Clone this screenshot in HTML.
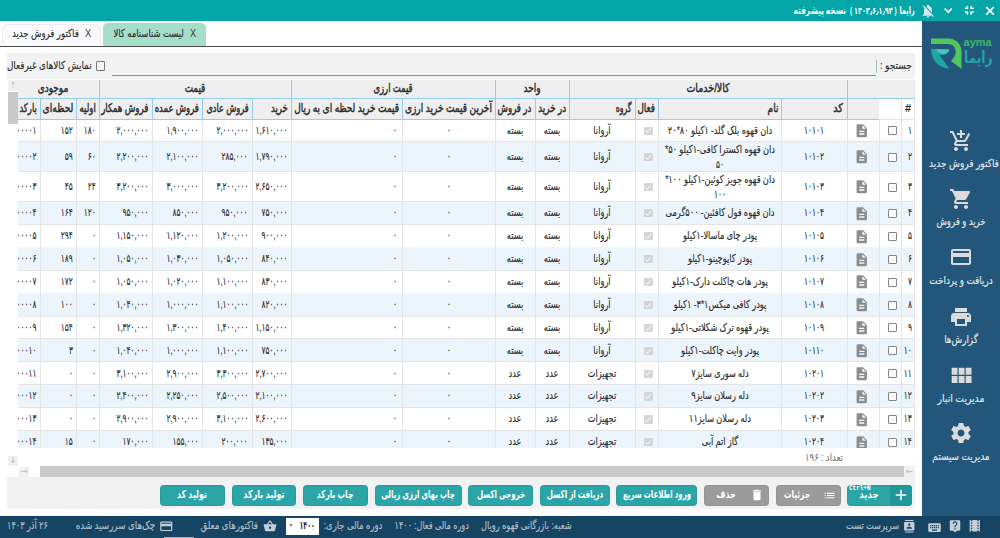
<!DOCTYPE html>
<html lang="fa" dir="rtl"><head><meta charset="utf-8"><title>رایما - لیست شناسنامه کالا</title><style>
html,body{margin:0;padding:0}
body{width:1000px;height:538px;overflow:hidden;background:#fff;position:relative;font-family:'Liberation Sans','DejaVu Sans',sans-serif;direction:rtl}
div{position:absolute}
#titlebar,#sidebar,#tabs,#panel,#grid,#buttons,#statusbar{left:0;top:0;width:1000px;height:538px;overflow:hidden}
.t{position:absolute;white-space:nowrap;line-height:1;direction:rtl;unicode-bidi:isolate;-webkit-text-stroke:.15px}
.b{font-weight:bold;-webkit-text-stroke:0}
.sb{-webkit-text-stroke:.45px}
.ic{position:absolute;display:block}
</style></head><body>
<div id="titlebar">
<div style="left:0px;top:0px;width:1000px;height:20.5px;background:#03a5a7;"></div>
<svg class="ic" style="left:900px;top:0;width:100px;height:21px" viewBox="900 0 100 21"><g fill="none" stroke="#fff" stroke-width="1.7"><path d="M986.2 7.100l7.600 7.600M993.800 7.100l-7.600 7.600"/><path stroke-width="1.800" d="M944.700 8.700l3.500 3.500 3.500-3.500"/></g></svg>
<svg class="ic" style="left:961.85px;top:3.25px;width:14.5px;height:14.5px;stroke:#fff;stroke-width:.5px;" viewBox="0 0 24 24"><path fill="#fff" d="M5 16h3v3h2v-5H5v2zm3-8H5v2h5V5H8v3zm6 11h2v-3h3v-2h-5v5zm2-11V5h-2v5h5V8h-3z"/></svg>
<svg class="ic" style="left:919.8px;top:3.2px;width:16px;height:16px;" viewBox="0 0 24 24"><path fill="#d3e9ee" d="M20 18.69L7.84 6.14 5.27 3.49 4 4.76l2.8 2.8v.01c-.52.99-.8 2.16-.8 3.42v5l-2 2v1h13.73l2 2L21 19.72l-1-1.03zM12 22c1.11 0 2-.89 2-2h-4c0 1.11.89 2 2 2zm6-7.32V11c0-3.08-1.64-5.64-4.5-6.32V4c0-.83-.67-1.5-1.5-1.5s-1.5.67-1.5 1.5v.68c-.15.03-.29.08-.42.12-.1.03-.2.07-.3.11h-.01c-.01 0-.01 0-.02.01-.23.09-.46.2-.68.31 0 0-.01 0-.01.01L18 14.68z"/></svg>
<span class="t b" style="top:10.3px;font-size:11px;color:#fff;right:85.2px;transform-origin:right center;transform:translateY(-50%) scaleX(0.588);">رایما</span>
<span class="t b" style="top:10.5px;font-size:9.5px;color:#fff;right:103.2px;transform-origin:right center;transform:translateY(-50%) scaleX(0.678);">( ۱۴۰۳٫۶٫۱٫۹۲ )</span>
<span class="t b" style="top:10.3px;font-size:11px;color:#fff;right:153.8px;transform-origin:right center;transform:translateY(-50%) scaleX(0.673);">نسخه پیشرفته</span>
</div>
<div id="sidebar">
<div style="left:922.3px;top:21px;width:77.7px;height:495px;background:#22577b;"></div>
<svg class="ic" style="left:926px;top:32px;width:72px;height:44px" viewBox="926 32 72 44">
<path fill="#52c75c" d="M931 38.600H948C956 38.600 961.500 44 961.500 52V69L951 61C953.500 58 955.700 55.500 955.700 52C955.700 47 952.500 44.100 948 44.100H931Z"/>
<path fill="#1fa79f" d="M931 49H949.400C949.400 52 947 54.500 943.500 54.700L939.300 54.700L949.400 68.700C938 68 931.500 60 931 49Z"/>
<path fill="#49c6c4" d="M936 49.500H949C948.500 52.500 945.500 54 942.500 54C939.500 53.500 937.500 52 936 49.500Z"/>
<text x="977.6" y="46.300" font-family="'Liberation Sans',sans-serif" font-size="11" font-weight="bold" fill="#3dba6c" text-anchor="middle" textLength="28.200" lengthAdjust="spacingAndGlyphs">ayma</text>
</svg>
<span class="t b" style="top:56.6px;font-size:16.5px;color:#2a9fb0;font-family:'Liberation Sans','DejaVu Sans',sans-serif;right:7.5px;transform-origin:right center;transform:translateY(-50%) scaleX(0.744);">رایما</span>
<svg class="ic" style="left:949px;top:129.3px;width:24px;height:24px;" viewBox="0 0 24 24"><path fill="#dcdcdc" d="M11 9h2V6h3V4h-3V1h-2v3H8v2h3v3zm-4 9c-1.1 0-1.99.9-1.99 2S5.9 22 7 22s2-.9 2-2-.9-2-2-2zm10 0c-1.1 0-1.99.9-1.99 2s.89 2 1.99 2 2-.9 2-2-.9-2-2-2zm-9.83-3.25l.03-.12.9-1.63h7.45c.75 0 1.41-.41 1.75-1.03l3.86-7.01L19.42 4h-.01l-1.1 2-2.76 5H8.53l-.13-.27L6.16 6l-.95-2-.94-2H1v2h2l3.6 7.59-1.35 2.45c-.16.28-.25.61-.25.96 0 1.1.9 2 2 2h12v-2H7.42c-.13 0-.25-.11-.25-.25z"/></svg>
<span class="t" style="top:163px;font-size:11px;color:#e6e9ec;left:964px;transform:translate(-50%,-50%) scaleX(0.814);">فاکتور فروش جدید</span>
<svg class="ic" style="left:949px;top:187.3px;width:24px;height:24px;" viewBox="0 0 24 24"><path fill="#dcdcdc" d="M7 18c-1.1 0-1.99.9-1.99 2S5.9 22 7 22s2-.9 2-2-.9-2-2-2zM1 2v2h2l3.6 7.59-1.35 2.45c-.16.28-.25.61-.25.96 0 1.1.9 2 2 2h12v-2H7.42c-.14 0-.25-.11-.25-.25l.03-.12.9-1.63h7.45c.75 0 1.41-.41 1.75-1.03l3.58-6.49c.08-.14.12-.31.12-.48 0-.55-.45-1-1-1H5.21l-.94-2H1zm16 16c-1.1 0-1.99.9-1.99 2s.89 2 1.99 2 2-.9 2-2-.9-2-2-2z"/></svg>
<span class="t" style="top:221px;font-size:11px;color:#e6e9ec;left:961px;transform:translate(-50%,-50%) scaleX(0.778);">خرید و فروش</span>
<svg class="ic" style="left:949px;top:245px;width:24px;height:24px;" viewBox="0 0 24 24"><path fill="#dcdcdc" d="M20 4H4c-1.11 0-1.99.89-1.99 2L2 18c0 1.11.89 2 2 2h16c1.11 0 2-.89 2-2V6c0-1.11-.89-2-2-2zm0 14H4v-6h16v6zm0-10H4V6h16v2z"/></svg>
<span class="t" style="top:280px;font-size:11px;color:#e6e9ec;left:961px;transform:translate(-50%,-50%) scaleX(0.804);">دریافت و پرداخت</span>
<svg class="ic" style="left:949px;top:304.7px;width:24px;height:24px;" viewBox="0 0 24 24"><path fill="#dcdcdc" d="M19 8H5c-1.66 0-3 1.34-3 3v6h4v4h12v-4h4v-6c0-1.66-1.34-3-3-3zm-3 11H8v-5h8v5zm3-7c-.55 0-1-.45-1-1s.45-1 1-1 1 .45 1 1-.45 1-1 1zm-1-9H6v4h12V3z"/></svg>
<span class="t" style="top:338.5px;font-size:11px;color:#e6e9ec;left:961px;transform:translate(-50%,-50%) scaleX(0.798);">گزارش‌ها</span>
<svg class="ic" style="left:947px;top:362px;width:28px;height:28px;" viewBox="0 0 24 24"><path fill="#dcdcdc" d="M4 11h5V5H4v6zm0 7h5v-6H4v6zm6 0h5v-6h-5v6zm6 0h5v-6h-5v6zm-6-7h5V5h-5v6zm6-6v6h5V5h-5z"/></svg>
<span class="t" style="top:397.7px;font-size:11px;color:#e6e9ec;left:961px;transform:translate(-50%,-50%) scaleX(0.839);">مدیریت انبار</span>
<svg class="ic" style="left:949px;top:421.4px;width:24px;height:24px;" viewBox="0 0 24 24"><path fill="#dcdcdc" d="M19.43 12.98c.04-.32.07-.64.07-.98s-.03-.66-.07-.98l2.11-1.65c.19-.15.24-.42.12-.64l-2-3.46c-.12-.22-.39-.3-.61-.22l-2.49 1c-.52-.4-1.08-.73-1.69-.98l-.38-2.65C14.46 2.18 14.25 2 14 2h-4c-.25 0-.46.18-.49.42l-.38 2.65c-.61.25-1.17.59-1.69.98l-2.49-1c-.23-.09-.49 0-.61.22l-2 3.46c-.13.22-.07.49.12.64l2.11 1.65c-.04.32-.07.65-.07.98s.03.66.07.98l-2.11 1.65c-.19.15-.24.42-.12.64l2 3.46c.12.22.39.3.61.22l2.49-1c.52.4 1.08.73 1.69.98l.38 2.65c.03.24.24.42.49.42h4c.25 0 .46-.18.49-.42l.38-2.65c.61-.25 1.17-.59 1.69-.98l2.49 1c.23.09.49 0 .61-.22l2-3.46c.12-.22.07-.49-.12-.64l-2.11-1.65zM12 15.5c-1.93 0-3.5-1.57-3.5-3.5s1.57-3.5 3.5-3.5 3.5 1.57 3.5 3.5-1.57 3.5-3.5 3.5z"/></svg>
<span class="t" style="top:456px;font-size:11px;color:#e6e9ec;left:961px;transform:translate(-50%,-50%) scaleX(0.81);">مدیریت سیستم</span>
</div>
<div id="tabs">
<div style="left:103px;top:23px;width:102.7px;height:24px;background:#a6dfc9;border-radius:5px 5px 0 0;"></div>
<div style="left:2.3px;top:23.5px;width:98.7px;height:23px;background:#f9f9fb;border-radius:5px 5px 0 0;border:1px solid #ececec;border-bottom:none;box-sizing:border-box;"></div>
<div style="left:0px;top:46px;width:922.5px;height:1px;background:#4a4a4a;"></div>
<span class="t" style="top:34px;font-size:11.5px;color:#333;font-family:'Liberation Sans',sans-serif;left:192.5px;transform:translate(-50%,-50%) scaleX(0.8);-webkit-text-stroke:0;">X</span>
<span class="t" style="top:32.8px;font-size:11px;color:#2b2b2b;right:816px;transform-origin:right center;transform:translateY(-50%) scaleX(0.766);">لیست شناسنامه کالا</span>
<span class="t" style="top:34px;font-size:11.5px;color:#333;font-family:'Liberation Sans',sans-serif;left:87.5px;transform:translate(-50%,-50%) scaleX(0.8);-webkit-text-stroke:0;">X</span>
<span class="t" style="top:32.8px;font-size:11px;color:#2b2b2b;right:921.2px;transform-origin:right center;transform:translateY(-50%) scaleX(0.779);">فاکتور فروش جدید</span>
</div>
<div id="panel">
<div style="left:7px;top:53px;width:908.3px;height:456px;background:#f2f2f2;"></div>
<span class="t" style="top:65px;font-size:11px;color:#2b2b2b;right:87.7px;transform-origin:right center;transform:translateY(-50%) scaleX(0.821);">جستجو :</span>
<div style="left:112px;top:74.6px;width:764px;height:1.2px;background:#8e8e8e;"></div>
<div style="left:7px;top:78.6px;width:908.3px;height:1.2px;background:#fbfbfb;"></div>
<div style="left:875.5px;top:59.5px;width:1px;height:13px;background:#9dbdb0;"></div>
<div style="left:96px;top:61.4px;width:9px;height:9.2px;background:#f6f6f6;border-radius:1px;border:1px solid #777;box-sizing:border-box;"></div>
<span class="t" style="top:65.3px;font-size:11px;color:#2b2b2b;right:908px;transform-origin:right center;transform:translateY(-50%) scaleX(0.802);">نمایش کالاهای غیرفعال</span>
</div>
<div id="grid">
<div style="left:7px;top:80px;width:907.7px;height:368px;background:#fff;"></div>
<div style="left:7px;top:80px;width:907.7px;height:18.5px;background:#f0efef;"></div>
<div style="left:7px;top:98.5px;width:872px;height:20.5px;background:#f0efef;"></div>
<div style="left:7px;top:141px;width:907.7px;height:1px;background:#e5e5e5;"></div>
<div style="left:7px;top:141.5px;width:907.7px;height:30px;background:#edf5fc;"></div>
<div style="left:7px;top:171px;width:907.7px;height:1px;background:#e5e5e5;"></div>
<div style="left:7px;top:201px;width:907.7px;height:1px;background:#e5e5e5;"></div>
<div style="left:7px;top:201.5px;width:907.7px;height:22.9px;background:#edf5fc;"></div>
<div style="left:7px;top:223.9px;width:907.7px;height:1px;background:#e5e5e5;"></div>
<div style="left:7px;top:246.8px;width:907.7px;height:1px;background:#e5e5e5;"></div>
<div style="left:7px;top:247.3px;width:907.7px;height:22.9px;background:#edf5fc;"></div>
<div style="left:7px;top:269.7px;width:907.7px;height:1px;background:#e5e5e5;"></div>
<div style="left:7px;top:292.6px;width:907.7px;height:1px;background:#e5e5e5;"></div>
<div style="left:7px;top:293.1px;width:907.7px;height:22.9px;background:#edf5fc;"></div>
<div style="left:7px;top:315.5px;width:907.7px;height:1px;background:#e5e5e5;"></div>
<div style="left:7px;top:338.4px;width:907.7px;height:1px;background:#e5e5e5;"></div>
<div style="left:7px;top:338.9px;width:907.7px;height:22.9px;background:#edf5fc;"></div>
<div style="left:7px;top:361.3px;width:907.7px;height:1px;background:#e5e5e5;"></div>
<div style="left:7px;top:384.2px;width:907.7px;height:1px;background:#e5e5e5;"></div>
<div style="left:7px;top:384.7px;width:907.7px;height:22.9px;background:#edf5fc;"></div>
<div style="left:7px;top:407.1px;width:907.7px;height:1px;background:#e5e5e5;"></div>
<div style="left:7px;top:430px;width:907.7px;height:1px;background:#e5e5e5;"></div>
<div style="left:7px;top:430.5px;width:907.7px;height:17.5px;background:#edf5fc;"></div>
<div style="left:7px;top:447.5px;width:907.7px;height:1px;background:#e5e5e5;"></div>
<div style="left:901px;top:119px;width:1px;height:329px;background:#e5e5e5;"></div>
<div style="left:878.5px;top:119px;width:1px;height:329px;background:#e5e5e5;"></div>
<div style="left:846.5px;top:119px;width:1px;height:329px;background:#e5e5e5;"></div>
<div style="left:781px;top:119px;width:1px;height:329px;background:#e5e5e5;"></div>
<div style="left:657.5px;top:119px;width:1px;height:329px;background:#e5e5e5;"></div>
<div style="left:634.5px;top:119px;width:1px;height:329px;background:#e5e5e5;"></div>
<div style="left:569px;top:119px;width:1px;height:329px;background:#e5e5e5;"></div>
<div style="left:534.5px;top:119px;width:1px;height:329px;background:#e5e5e5;"></div>
<div style="left:494.5px;top:119px;width:1px;height:329px;background:#e5e5e5;"></div>
<div style="left:402px;top:119px;width:1px;height:329px;background:#e5e5e5;"></div>
<div style="left:291px;top:119px;width:1px;height:329px;background:#e5e5e5;"></div>
<div style="left:252px;top:119px;width:1px;height:329px;background:#e5e5e5;"></div>
<div style="left:202px;top:119px;width:1px;height:329px;background:#e5e5e5;"></div>
<div style="left:151.5px;top:119px;width:1px;height:329px;background:#e5e5e5;"></div>
<div style="left:98.5px;top:119px;width:1px;height:329px;background:#e5e5e5;"></div>
<div style="left:76px;top:119px;width:1px;height:329px;background:#e5e5e5;"></div>
<div style="left:40px;top:119px;width:1px;height:329px;background:#e5e5e5;"></div>
<div style="left:914.2px;top:80px;width:1px;height:368px;background:#e5e5e5;"></div>
<div style="left:846.5px;top:98.5px;width:1px;height:20.5px;background:#93cdec;"></div>
<div style="left:781px;top:98.5px;width:1px;height:20.5px;background:#93cdec;"></div>
<div style="left:657.5px;top:98.5px;width:1px;height:20.5px;background:#93cdec;"></div>
<div style="left:634.5px;top:98.5px;width:1px;height:20.5px;background:#93cdec;"></div>
<div style="left:569px;top:98.5px;width:1px;height:20.5px;background:#93cdec;"></div>
<div style="left:534.5px;top:98.5px;width:1px;height:20.5px;background:#93cdec;"></div>
<div style="left:494.5px;top:98.5px;width:1px;height:20.5px;background:#93cdec;"></div>
<div style="left:402px;top:98.5px;width:1px;height:20.5px;background:#93cdec;"></div>
<div style="left:291px;top:98.5px;width:1px;height:20.5px;background:#93cdec;"></div>
<div style="left:252px;top:98.5px;width:1px;height:20.5px;background:#93cdec;"></div>
<div style="left:202px;top:98.5px;width:1px;height:20.5px;background:#93cdec;"></div>
<div style="left:151.5px;top:98.5px;width:1px;height:20.5px;background:#93cdec;"></div>
<div style="left:98.5px;top:98.5px;width:1px;height:20.5px;background:#93cdec;"></div>
<div style="left:76px;top:98.5px;width:1px;height:20.5px;background:#93cdec;"></div>
<div style="left:40px;top:98.5px;width:1px;height:20.5px;background:#93cdec;"></div>
<div style="left:901px;top:98.5px;width:1px;height:20.5px;background:#e5e5e5;"></div>
<div style="left:846.5px;top:80px;width:1px;height:39px;background:#93cdec;"></div>
<div style="left:569px;top:80px;width:1px;height:39px;background:#93cdec;"></div>
<div style="left:494.5px;top:80px;width:1px;height:39px;background:#93cdec;"></div>
<div style="left:291px;top:80px;width:1px;height:39px;background:#93cdec;"></div>
<div style="left:98.5px;top:80px;width:1px;height:39px;background:#93cdec;"></div>
<div style="left:7px;top:98px;width:907.7px;height:1px;background:#93cdec;"></div>
<div style="left:7px;top:118.5px;width:872px;height:1px;background:#93cdec;"></div>
<div style="left:879px;top:118.5px;width:36px;height:1px;background:#e5e5e5;"></div>
<span class="t sb" style="top:88.3px;font-size:12px;color:#2b2b2b;left:708px;transform:translate(-50%,-50%) scaleX(0.791);">کالا/خدمات</span>
<span class="t sb" style="top:88.3px;font-size:12px;color:#2b2b2b;left:532.3px;transform:translate(-50%,-50%) scaleX(0.752);">واحد</span>
<span class="t sb" style="top:88.3px;font-size:12px;color:#2b2b2b;left:393.3px;transform:translate(-50%,-50%) scaleX(0.702);">قیمت ارزی</span>
<span class="t sb" style="top:88.3px;font-size:12px;color:#2b2b2b;left:195.3px;transform:translate(-50%,-50%) scaleX(0.732);">قیمت</span>
<span class="t sb" style="top:88.3px;font-size:12px;color:#2b2b2b;left:52.8px;transform:translate(-50%,-50%) scaleX(0.744);">موجودی</span>
<span class="t b" style="top:107.5px;font-size:11px;color:#2b2b2b;font-family:'Liberation Sans',sans-serif;left:908px;transform:translate(-50%,-50%) scaleX(1);">#</span>
<span class="t sb" style="top:107.8px;font-size:12px;color:#2b2b2b;right:156.5px;transform-origin:right center;transform:translateY(-50%) scaleX(0.817);">کد</span>
<span class="t sb" style="top:107.8px;font-size:12px;color:#2b2b2b;right:222px;transform-origin:right center;transform:translateY(-50%) scaleX(0.75);">نام</span>
<span class="t sb" style="top:107.8px;font-size:12px;color:#2b2b2b;right:345.5px;transform-origin:right center;transform:translateY(-50%) scaleX(0.729);">فعال</span>
<span class="t sb" style="top:107.8px;font-size:12px;color:#2b2b2b;right:368.5px;transform-origin:right center;transform:translateY(-50%) scaleX(0.646);">گروه</span>
<span class="t sb" style="top:107.8px;font-size:12px;color:#2b2b2b;right:434px;transform-origin:right center;transform:translateY(-50%) scaleX(0.732);">در خرید</span>
<span class="t sb" style="top:107.8px;font-size:12px;color:#2b2b2b;right:468.5px;transform-origin:right center;transform:translateY(-50%) scaleX(0.713);">در فروش</span>
<span class="t sb" style="top:107.8px;font-size:12px;color:#2b2b2b;right:508.5px;transform-origin:right center;transform:translateY(-50%) scaleX(0.75);">آخرین قیمت خرید ارزی</span>
<span class="t sb" style="top:107.8px;font-size:12px;color:#2b2b2b;right:601px;transform-origin:right center;transform:translateY(-50%) scaleX(0.749);">قیمت خرید لحظه ای به ریال</span>
<span class="t sb" style="top:107.8px;font-size:12px;color:#2b2b2b;right:712px;transform-origin:right center;transform:translateY(-50%) scaleX(0.708);">خرید</span>
<span class="t sb" style="top:107.8px;font-size:12px;color:#2b2b2b;right:751px;transform-origin:right center;transform:translateY(-50%) scaleX(0.685);">فروش عادی</span>
<span class="t sb" style="top:107.8px;font-size:12px;color:#2b2b2b;right:801px;transform-origin:right center;transform:translateY(-50%) scaleX(0.703);">فروش عمده</span>
<span class="t sb" style="top:107.8px;font-size:12px;color:#2b2b2b;right:851.5px;transform-origin:right center;transform:translateY(-50%) scaleX(0.723);">فروش همکار</span>
<span class="t sb" style="top:107.8px;font-size:12px;color:#2b2b2b;right:904.5px;transform-origin:right center;transform:translateY(-50%) scaleX(0.717);">اولیه</span>
<span class="t sb" style="top:107.8px;font-size:12px;color:#2b2b2b;right:927px;transform-origin:right center;transform:translateY(-50%) scaleX(0.762);">لحظه‌ای</span>
<span class="t sb" style="top:107.8px;font-size:12px;color:#2b2b2b;right:963px;transform-origin:right center;transform:translateY(-50%) scaleX(0.7);">بارکد</span>
<span class="t" style="top:129.55px;font-size:11px;color:#2b2b2b;right:87.8px;transform-origin:right center;transform:translateY(-50%) scaleX(0.675);">۱</span>
<div style="left:887.5px;top:126.25px;width:9px;height:9px;background:#fff;border:1px solid #858585;border-radius:1px;box-sizing:border-box;"></div>
<svg class="ic" style="left:853.55px;top:123px;width:15.5px;height:15.5px;" viewBox="0 0 24 24"><path fill="#8c8c8c" d="M14 2H6c-1.1 0-1.99.9-1.99 2L4 20c0 1.1.89 2 1.99 2H18c1.1 0 2-.9 2-2V8l-6-6zm2 16H8v-2h8v2zm0-4H8v-2h8v2zm-3-5V3.5L18.5 9H13z"/></svg>
<span class="t" style="top:129.55px;font-size:11px;color:#2b2b2b;left:814px;transform:translate(-50%,-50%) scaleX(0.675);">۱۰۱۰۱</span>
<span class="t" style="top:129.55px;font-size:11px;color:#2b2b2b;left:719.5px;transform:translate(-50%,-50%) scaleX(0.747);">دان قهوه بلک گلد- ۱کیلو ۸۰*۲۰</span>
<div style="left:644px;top:126.55px;width:8.9px;height:8.2px;background:#d5d5d5;border-radius:1px;"></div>
<svg class="ic" style="left:644.15px;top:126.4px;width:8.5px;height:8.5px;" viewBox="0 0 24 24"><path fill="#fff" d="M9 16.17L4.83 12l-1.42 1.41L9 19 21 7l-1.41-1.41z"/></svg>
<span class="t" style="top:129.55px;font-size:11px;color:#2b2b2b;left:602px;transform:translate(-50%,-50%) scaleX(0.747);">آروانا</span>
<span class="t" style="top:129.55px;font-size:11px;color:#2b2b2b;left:552px;transform:translate(-50%,-50%) scaleX(0.747);">بسته</span>
<span class="t" style="top:129.55px;font-size:11px;color:#2b2b2b;left:515px;transform:translate(-50%,-50%) scaleX(0.747);">بسته</span>
<span class="t" style="top:129.55px;font-size:11px;color:#2b2b2b;left:449px;transform:translate(-50%,-50%) scaleX(0.675);">۰</span>
<span class="t" style="top:129.55px;font-size:11px;color:#2b2b2b;right:603.5px;transform-origin:right center;transform:translateY(-50%) scaleX(0.675);">۰</span>
<span class="t" style="top:129.55px;font-size:11px;color:#2b2b2b;right:712.3px;transform-origin:right center;transform:translateY(-50%) scaleX(0.675);">۱,۶۱۰,۰۰۰</span>
<span class="t" style="top:129.55px;font-size:11px;color:#2b2b2b;right:752px;transform-origin:right center;transform:translateY(-50%) scaleX(0.675);">۲,۰۰۰,۰۰۰</span>
<span class="t" style="top:129.55px;font-size:11px;color:#2b2b2b;right:801.2px;transform-origin:right center;transform:translateY(-50%) scaleX(0.675);">۱,۹۰۰,۰۰۰</span>
<span class="t" style="top:129.55px;font-size:11px;color:#2b2b2b;right:851.8px;transform-origin:right center;transform:translateY(-50%) scaleX(0.675);">۲,۰۰۰,۰۰۰</span>
<span class="t" style="top:129.55px;font-size:11px;color:#2b2b2b;right:904.5px;transform-origin:right center;transform:translateY(-50%) scaleX(0.675);">۱۸۰</span>
<span class="t" style="top:129.55px;font-size:11px;color:#2b2b2b;right:927.5px;transform-origin:right center;transform:translateY(-50%) scaleX(0.675);">۱۵۲</span>
<span class="t" style="top:129.55px;font-size:11px;color:#2b2b2b;right:963px;transform-origin:right center;transform:translateY(-50%) scaleX(0.675);">۰۰۰۰۱</span>
<span class="t" style="top:155.8px;font-size:11px;color:#2b2b2b;right:87.8px;transform-origin:right center;transform:translateY(-50%) scaleX(0.675);">۲</span>
<div style="left:887.5px;top:152.5px;width:9px;height:9px;background:#fff;border:1px solid #858585;border-radius:1px;box-sizing:border-box;"></div>
<svg class="ic" style="left:853.55px;top:149.25px;width:15.5px;height:15.5px;" viewBox="0 0 24 24"><path fill="#8c8c8c" d="M14 2H6c-1.1 0-1.99.9-1.99 2L4 20c0 1.1.89 2 1.99 2H18c1.1 0 2-.9 2-2V8l-6-6zm2 16H8v-2h8v2zm0-4H8v-2h8v2zm-3-5V3.5L18.5 9H13z"/></svg>
<span class="t" style="top:155.8px;font-size:11px;color:#2b2b2b;left:814px;transform:translate(-50%,-50%) scaleX(0.675);">۱۰۱۰۲</span>
<span class="t" style="top:148.5px;font-size:11px;color:#2b2b2b;left:719.5px;transform:translate(-50%,-50%) scaleX(0.747);">دان قهوه اکسترا کافی-۱کیلو ۵۰*</span>
<span class="t" style="top:163.5px;font-size:11px;color:#2b2b2b;left:719.5px;transform:translate(-50%,-50%) scaleX(0.675);">۵۰</span>
<div style="left:644px;top:152.8px;width:8.9px;height:8.2px;background:#d5d5d5;border-radius:1px;"></div>
<svg class="ic" style="left:644.15px;top:152.65px;width:8.5px;height:8.5px;" viewBox="0 0 24 24"><path fill="#fff" d="M9 16.17L4.83 12l-1.42 1.41L9 19 21 7l-1.41-1.41z"/></svg>
<span class="t" style="top:155.8px;font-size:11px;color:#2b2b2b;left:602px;transform:translate(-50%,-50%) scaleX(0.747);">آروانا</span>
<span class="t" style="top:155.8px;font-size:11px;color:#2b2b2b;left:552px;transform:translate(-50%,-50%) scaleX(0.747);">بسته</span>
<span class="t" style="top:155.8px;font-size:11px;color:#2b2b2b;left:515px;transform:translate(-50%,-50%) scaleX(0.747);">بسته</span>
<span class="t" style="top:155.8px;font-size:11px;color:#2b2b2b;left:449px;transform:translate(-50%,-50%) scaleX(0.675);">۰</span>
<span class="t" style="top:155.8px;font-size:11px;color:#2b2b2b;right:603.5px;transform-origin:right center;transform:translateY(-50%) scaleX(0.675);">۰</span>
<span class="t" style="top:155.8px;font-size:11px;color:#2b2b2b;right:712.3px;transform-origin:right center;transform:translateY(-50%) scaleX(0.675);">۱,۷۹۰,۰۰۰</span>
<span class="t" style="top:155.8px;font-size:11px;color:#2b2b2b;right:752px;transform-origin:right center;transform:translateY(-50%) scaleX(0.675);">۲۸۵,۰۰۰</span>
<span class="t" style="top:155.8px;font-size:11px;color:#2b2b2b;right:801.2px;transform-origin:right center;transform:translateY(-50%) scaleX(0.675);">۲,۱۰۰,۰۰۰</span>
<span class="t" style="top:155.8px;font-size:11px;color:#2b2b2b;right:851.8px;transform-origin:right center;transform:translateY(-50%) scaleX(0.675);">۲,۲۰۰,۰۰۰</span>
<span class="t" style="top:155.8px;font-size:11px;color:#2b2b2b;right:904.5px;transform-origin:right center;transform:translateY(-50%) scaleX(0.675);">۶۰</span>
<span class="t" style="top:155.8px;font-size:11px;color:#2b2b2b;right:927.5px;transform-origin:right center;transform:translateY(-50%) scaleX(0.675);">۵۹</span>
<span class="t" style="top:155.8px;font-size:11px;color:#2b2b2b;right:963px;transform-origin:right center;transform:translateY(-50%) scaleX(0.675);">۰۰۰۰۲</span>
<span class="t" style="top:185.8px;font-size:11px;color:#2b2b2b;right:87.8px;transform-origin:right center;transform:translateY(-50%) scaleX(0.675);">۳</span>
<div style="left:887.5px;top:182.5px;width:9px;height:9px;background:#fff;border:1px solid #858585;border-radius:1px;box-sizing:border-box;"></div>
<svg class="ic" style="left:853.55px;top:179.25px;width:15.5px;height:15.5px;" viewBox="0 0 24 24"><path fill="#8c8c8c" d="M14 2H6c-1.1 0-1.99.9-1.99 2L4 20c0 1.1.89 2 1.99 2H18c1.1 0 2-.9 2-2V8l-6-6zm2 16H8v-2h8v2zm0-4H8v-2h8v2zm-3-5V3.5L18.5 9H13z"/></svg>
<span class="t" style="top:185.8px;font-size:11px;color:#2b2b2b;left:814px;transform:translate(-50%,-50%) scaleX(0.675);">۱۰۱۰۳</span>
<span class="t" style="top:178.5px;font-size:11px;color:#2b2b2b;left:719.5px;transform:translate(-50%,-50%) scaleX(0.747);">دان قهوه جویز کوئین-۱کیلو ۱۰۰*</span>
<span class="t" style="top:193.5px;font-size:11px;color:#2b2b2b;left:719.5px;transform:translate(-50%,-50%) scaleX(0.675);">۱۰۰</span>
<div style="left:644px;top:182.8px;width:8.9px;height:8.2px;background:#d5d5d5;border-radius:1px;"></div>
<svg class="ic" style="left:644.15px;top:182.65px;width:8.5px;height:8.5px;" viewBox="0 0 24 24"><path fill="#fff" d="M9 16.17L4.83 12l-1.42 1.41L9 19 21 7l-1.41-1.41z"/></svg>
<span class="t" style="top:185.8px;font-size:11px;color:#2b2b2b;left:602px;transform:translate(-50%,-50%) scaleX(0.747);">آروانا</span>
<span class="t" style="top:185.8px;font-size:11px;color:#2b2b2b;left:552px;transform:translate(-50%,-50%) scaleX(0.747);">بسته</span>
<span class="t" style="top:185.8px;font-size:11px;color:#2b2b2b;left:515px;transform:translate(-50%,-50%) scaleX(0.747);">بسته</span>
<span class="t" style="top:185.8px;font-size:11px;color:#2b2b2b;left:449px;transform:translate(-50%,-50%) scaleX(0.675);">۰</span>
<span class="t" style="top:185.8px;font-size:11px;color:#2b2b2b;right:603.5px;transform-origin:right center;transform:translateY(-50%) scaleX(0.675);">۰</span>
<span class="t" style="top:185.8px;font-size:11px;color:#2b2b2b;right:712.3px;transform-origin:right center;transform:translateY(-50%) scaleX(0.675);">۲,۶۵۰,۰۰۰</span>
<span class="t" style="top:185.8px;font-size:11px;color:#2b2b2b;right:752px;transform-origin:right center;transform:translateY(-50%) scaleX(0.675);">۳,۲۰۰,۰۰۰</span>
<span class="t" style="top:185.8px;font-size:11px;color:#2b2b2b;right:801.2px;transform-origin:right center;transform:translateY(-50%) scaleX(0.675);">۳,۰۰۰,۰۰۰</span>
<span class="t" style="top:185.8px;font-size:11px;color:#2b2b2b;right:851.8px;transform-origin:right center;transform:translateY(-50%) scaleX(0.675);">۳,۲۰۰,۰۰۰</span>
<span class="t" style="top:185.8px;font-size:11px;color:#2b2b2b;right:904.5px;transform-origin:right center;transform:translateY(-50%) scaleX(0.675);">۲۴</span>
<span class="t" style="top:185.8px;font-size:11px;color:#2b2b2b;right:927.5px;transform-origin:right center;transform:translateY(-50%) scaleX(0.675);">۴۵</span>
<span class="t" style="top:185.8px;font-size:11px;color:#2b2b2b;right:963px;transform-origin:right center;transform:translateY(-50%) scaleX(0.675);">۰۰۰۰۳</span>
<span class="t" style="top:212.25px;font-size:11px;color:#2b2b2b;right:87.8px;transform-origin:right center;transform:translateY(-50%) scaleX(0.675);">۴</span>
<div style="left:887.5px;top:208.95px;width:9px;height:9px;background:#fff;border:1px solid #858585;border-radius:1px;box-sizing:border-box;"></div>
<svg class="ic" style="left:853.55px;top:205.7px;width:15.5px;height:15.5px;" viewBox="0 0 24 24"><path fill="#8c8c8c" d="M14 2H6c-1.1 0-1.99.9-1.99 2L4 20c0 1.1.89 2 1.99 2H18c1.1 0 2-.9 2-2V8l-6-6zm2 16H8v-2h8v2zm0-4H8v-2h8v2zm-3-5V3.5L18.5 9H13z"/></svg>
<span class="t" style="top:212.25px;font-size:11px;color:#2b2b2b;left:814px;transform:translate(-50%,-50%) scaleX(0.675);">۱۰۱۰۴</span>
<span class="t" style="top:212.25px;font-size:11px;color:#2b2b2b;left:719.5px;transform:translate(-50%,-50%) scaleX(0.747);">دان قهوه فول کافئین- ۵۰۰گرمی</span>
<div style="left:644px;top:209.25px;width:8.9px;height:8.2px;background:#d5d5d5;border-radius:1px;"></div>
<svg class="ic" style="left:644.15px;top:209.1px;width:8.5px;height:8.5px;" viewBox="0 0 24 24"><path fill="#fff" d="M9 16.17L4.83 12l-1.42 1.41L9 19 21 7l-1.41-1.41z"/></svg>
<span class="t" style="top:212.25px;font-size:11px;color:#2b2b2b;left:602px;transform:translate(-50%,-50%) scaleX(0.747);">آروانا</span>
<span class="t" style="top:212.25px;font-size:11px;color:#2b2b2b;left:552px;transform:translate(-50%,-50%) scaleX(0.747);">بسته</span>
<span class="t" style="top:212.25px;font-size:11px;color:#2b2b2b;left:515px;transform:translate(-50%,-50%) scaleX(0.747);">بسته</span>
<span class="t" style="top:212.25px;font-size:11px;color:#2b2b2b;left:449px;transform:translate(-50%,-50%) scaleX(0.675);">۰</span>
<span class="t" style="top:212.25px;font-size:11px;color:#2b2b2b;right:603.5px;transform-origin:right center;transform:translateY(-50%) scaleX(0.675);">۰</span>
<span class="t" style="top:212.25px;font-size:11px;color:#2b2b2b;right:712.3px;transform-origin:right center;transform:translateY(-50%) scaleX(0.675);">۷۵۰,۰۰۰</span>
<span class="t" style="top:212.25px;font-size:11px;color:#2b2b2b;right:752px;transform-origin:right center;transform:translateY(-50%) scaleX(0.675);">۹۵۰,۰۰۰</span>
<span class="t" style="top:212.25px;font-size:11px;color:#2b2b2b;right:801.2px;transform-origin:right center;transform:translateY(-50%) scaleX(0.675);">۸۵۰,۰۰۰</span>
<span class="t" style="top:212.25px;font-size:11px;color:#2b2b2b;right:851.8px;transform-origin:right center;transform:translateY(-50%) scaleX(0.675);">۹۵۰,۰۰۰</span>
<span class="t" style="top:212.25px;font-size:11px;color:#2b2b2b;right:904.5px;transform-origin:right center;transform:translateY(-50%) scaleX(0.675);">۱۲۰</span>
<span class="t" style="top:212.25px;font-size:11px;color:#2b2b2b;right:927.5px;transform-origin:right center;transform:translateY(-50%) scaleX(0.675);">۱۶۴</span>
<span class="t" style="top:212.25px;font-size:11px;color:#2b2b2b;right:963px;transform-origin:right center;transform:translateY(-50%) scaleX(0.675);">۰۰۰۰۴</span>
<span class="t" style="top:235.15px;font-size:11px;color:#2b2b2b;right:87.8px;transform-origin:right center;transform:translateY(-50%) scaleX(0.675);">۵</span>
<div style="left:887.5px;top:231.85px;width:9px;height:9px;background:#fff;border:1px solid #858585;border-radius:1px;box-sizing:border-box;"></div>
<svg class="ic" style="left:853.55px;top:228.6px;width:15.5px;height:15.5px;" viewBox="0 0 24 24"><path fill="#8c8c8c" d="M14 2H6c-1.1 0-1.99.9-1.99 2L4 20c0 1.1.89 2 1.99 2H18c1.1 0 2-.9 2-2V8l-6-6zm2 16H8v-2h8v2zm0-4H8v-2h8v2zm-3-5V3.5L18.5 9H13z"/></svg>
<span class="t" style="top:235.15px;font-size:11px;color:#2b2b2b;left:814px;transform:translate(-50%,-50%) scaleX(0.675);">۱۰۱۰۵</span>
<span class="t" style="top:235.15px;font-size:11px;color:#2b2b2b;left:719.5px;transform:translate(-50%,-50%) scaleX(0.747);">پودر چای ماسالا-۱کیلو</span>
<div style="left:644px;top:232.15px;width:8.9px;height:8.2px;background:#d5d5d5;border-radius:1px;"></div>
<svg class="ic" style="left:644.15px;top:232px;width:8.5px;height:8.5px;" viewBox="0 0 24 24"><path fill="#fff" d="M9 16.17L4.83 12l-1.42 1.41L9 19 21 7l-1.41-1.41z"/></svg>
<span class="t" style="top:235.15px;font-size:11px;color:#2b2b2b;left:602px;transform:translate(-50%,-50%) scaleX(0.747);">آروانا</span>
<span class="t" style="top:235.15px;font-size:11px;color:#2b2b2b;left:552px;transform:translate(-50%,-50%) scaleX(0.747);">بسته</span>
<span class="t" style="top:235.15px;font-size:11px;color:#2b2b2b;left:515px;transform:translate(-50%,-50%) scaleX(0.747);">بسته</span>
<span class="t" style="top:235.15px;font-size:11px;color:#2b2b2b;left:449px;transform:translate(-50%,-50%) scaleX(0.675);">۰</span>
<span class="t" style="top:235.15px;font-size:11px;color:#2b2b2b;right:603.5px;transform-origin:right center;transform:translateY(-50%) scaleX(0.675);">۰</span>
<span class="t" style="top:235.15px;font-size:11px;color:#2b2b2b;right:712.3px;transform-origin:right center;transform:translateY(-50%) scaleX(0.675);">۹۰۰,۰۰۰</span>
<span class="t" style="top:235.15px;font-size:11px;color:#2b2b2b;right:752px;transform-origin:right center;transform:translateY(-50%) scaleX(0.675);">۱,۲۰۰,۰۰۰</span>
<span class="t" style="top:235.15px;font-size:11px;color:#2b2b2b;right:801.2px;transform-origin:right center;transform:translateY(-50%) scaleX(0.675);">۱,۱۲۰,۰۰۰</span>
<span class="t" style="top:235.15px;font-size:11px;color:#2b2b2b;right:851.8px;transform-origin:right center;transform:translateY(-50%) scaleX(0.675);">۱,۱۵۰,۰۰۰</span>
<span class="t" style="top:235.15px;font-size:11px;color:#2b2b2b;right:904.5px;transform-origin:right center;transform:translateY(-50%) scaleX(0.675);">۰</span>
<span class="t" style="top:235.15px;font-size:11px;color:#2b2b2b;right:927.5px;transform-origin:right center;transform:translateY(-50%) scaleX(0.675);">۲۹۴</span>
<span class="t" style="top:235.15px;font-size:11px;color:#2b2b2b;right:963px;transform-origin:right center;transform:translateY(-50%) scaleX(0.675);">۰۰۰۰۵</span>
<span class="t" style="top:258.05px;font-size:11px;color:#2b2b2b;right:87.8px;transform-origin:right center;transform:translateY(-50%) scaleX(0.675);">۶</span>
<div style="left:887.5px;top:254.75px;width:9px;height:9px;background:#fff;border:1px solid #858585;border-radius:1px;box-sizing:border-box;"></div>
<svg class="ic" style="left:853.55px;top:251.5px;width:15.5px;height:15.5px;" viewBox="0 0 24 24"><path fill="#8c8c8c" d="M14 2H6c-1.1 0-1.99.9-1.99 2L4 20c0 1.1.89 2 1.99 2H18c1.1 0 2-.9 2-2V8l-6-6zm2 16H8v-2h8v2zm0-4H8v-2h8v2zm-3-5V3.5L18.5 9H13z"/></svg>
<span class="t" style="top:258.05px;font-size:11px;color:#2b2b2b;left:814px;transform:translate(-50%,-50%) scaleX(0.675);">۱۰۱۰۶</span>
<span class="t" style="top:258.05px;font-size:11px;color:#2b2b2b;left:719.5px;transform:translate(-50%,-50%) scaleX(0.747);">پودر کاپوچینو-۱کیلو</span>
<div style="left:644px;top:255.05px;width:8.9px;height:8.2px;background:#d5d5d5;border-radius:1px;"></div>
<svg class="ic" style="left:644.15px;top:254.9px;width:8.5px;height:8.5px;" viewBox="0 0 24 24"><path fill="#fff" d="M9 16.17L4.83 12l-1.42 1.41L9 19 21 7l-1.41-1.41z"/></svg>
<span class="t" style="top:258.05px;font-size:11px;color:#2b2b2b;left:602px;transform:translate(-50%,-50%) scaleX(0.747);">آروانا</span>
<span class="t" style="top:258.05px;font-size:11px;color:#2b2b2b;left:552px;transform:translate(-50%,-50%) scaleX(0.747);">بسته</span>
<span class="t" style="top:258.05px;font-size:11px;color:#2b2b2b;left:515px;transform:translate(-50%,-50%) scaleX(0.747);">بسته</span>
<span class="t" style="top:258.05px;font-size:11px;color:#2b2b2b;left:449px;transform:translate(-50%,-50%) scaleX(0.675);">۰</span>
<span class="t" style="top:258.05px;font-size:11px;color:#2b2b2b;right:603.5px;transform-origin:right center;transform:translateY(-50%) scaleX(0.675);">۰</span>
<span class="t" style="top:258.05px;font-size:11px;color:#2b2b2b;right:712.3px;transform-origin:right center;transform:translateY(-50%) scaleX(0.675);">۸۴۰,۰۰۰</span>
<span class="t" style="top:258.05px;font-size:11px;color:#2b2b2b;right:752px;transform-origin:right center;transform:translateY(-50%) scaleX(0.675);">۱,۰۵۰,۰۰۰</span>
<span class="t" style="top:258.05px;font-size:11px;color:#2b2b2b;right:801.2px;transform-origin:right center;transform:translateY(-50%) scaleX(0.675);">۱,۰۳۰,۰۰۰</span>
<span class="t" style="top:258.05px;font-size:11px;color:#2b2b2b;right:851.8px;transform-origin:right center;transform:translateY(-50%) scaleX(0.675);">۱,۰۵۰,۰۰۰</span>
<span class="t" style="top:258.05px;font-size:11px;color:#2b2b2b;right:904.5px;transform-origin:right center;transform:translateY(-50%) scaleX(0.675);">۰</span>
<span class="t" style="top:258.05px;font-size:11px;color:#2b2b2b;right:927.5px;transform-origin:right center;transform:translateY(-50%) scaleX(0.675);">۱۸۹</span>
<span class="t" style="top:258.05px;font-size:11px;color:#2b2b2b;right:963px;transform-origin:right center;transform:translateY(-50%) scaleX(0.675);">۰۰۰۰۶</span>
<span class="t" style="top:280.95px;font-size:11px;color:#2b2b2b;right:87.8px;transform-origin:right center;transform:translateY(-50%) scaleX(0.675);">۷</span>
<div style="left:887.5px;top:277.65px;width:9px;height:9px;background:#fff;border:1px solid #858585;border-radius:1px;box-sizing:border-box;"></div>
<svg class="ic" style="left:853.55px;top:274.4px;width:15.5px;height:15.5px;" viewBox="0 0 24 24"><path fill="#8c8c8c" d="M14 2H6c-1.1 0-1.99.9-1.99 2L4 20c0 1.1.89 2 1.99 2H18c1.1 0 2-.9 2-2V8l-6-6zm2 16H8v-2h8v2zm0-4H8v-2h8v2zm-3-5V3.5L18.5 9H13z"/></svg>
<span class="t" style="top:280.95px;font-size:11px;color:#2b2b2b;left:814px;transform:translate(-50%,-50%) scaleX(0.675);">۱۰۱۰۷</span>
<span class="t" style="top:280.95px;font-size:11px;color:#2b2b2b;left:719.5px;transform:translate(-50%,-50%) scaleX(0.747);">پودر هات چاکلت دارک-۱کیلو</span>
<div style="left:644px;top:277.95px;width:8.9px;height:8.2px;background:#d5d5d5;border-radius:1px;"></div>
<svg class="ic" style="left:644.15px;top:277.8px;width:8.5px;height:8.5px;" viewBox="0 0 24 24"><path fill="#fff" d="M9 16.17L4.83 12l-1.42 1.41L9 19 21 7l-1.41-1.41z"/></svg>
<span class="t" style="top:280.95px;font-size:11px;color:#2b2b2b;left:602px;transform:translate(-50%,-50%) scaleX(0.747);">آروانا</span>
<span class="t" style="top:280.95px;font-size:11px;color:#2b2b2b;left:552px;transform:translate(-50%,-50%) scaleX(0.747);">بسته</span>
<span class="t" style="top:280.95px;font-size:11px;color:#2b2b2b;left:515px;transform:translate(-50%,-50%) scaleX(0.747);">بسته</span>
<span class="t" style="top:280.95px;font-size:11px;color:#2b2b2b;left:449px;transform:translate(-50%,-50%) scaleX(0.675);">۰</span>
<span class="t" style="top:280.95px;font-size:11px;color:#2b2b2b;right:603.5px;transform-origin:right center;transform:translateY(-50%) scaleX(0.675);">۰</span>
<span class="t" style="top:280.95px;font-size:11px;color:#2b2b2b;right:712.3px;transform-origin:right center;transform:translateY(-50%) scaleX(0.675);">۸۳۰,۰۰۰</span>
<span class="t" style="top:280.95px;font-size:11px;color:#2b2b2b;right:752px;transform-origin:right center;transform:translateY(-50%) scaleX(0.675);">۱,۱۰۰,۰۰۰</span>
<span class="t" style="top:280.95px;font-size:11px;color:#2b2b2b;right:801.2px;transform-origin:right center;transform:translateY(-50%) scaleX(0.675);">۱,۰۲۰,۰۰۰</span>
<span class="t" style="top:280.95px;font-size:11px;color:#2b2b2b;right:851.8px;transform-origin:right center;transform:translateY(-50%) scaleX(0.675);">۱,۰۵۰,۰۰۰</span>
<span class="t" style="top:280.95px;font-size:11px;color:#2b2b2b;right:904.5px;transform-origin:right center;transform:translateY(-50%) scaleX(0.675);">۰</span>
<span class="t" style="top:280.95px;font-size:11px;color:#2b2b2b;right:927.5px;transform-origin:right center;transform:translateY(-50%) scaleX(0.675);">۱۷۲</span>
<span class="t" style="top:280.95px;font-size:11px;color:#2b2b2b;right:963px;transform-origin:right center;transform:translateY(-50%) scaleX(0.675);">۰۰۰۰۷</span>
<span class="t" style="top:303.85px;font-size:11px;color:#2b2b2b;right:87.8px;transform-origin:right center;transform:translateY(-50%) scaleX(0.675);">۸</span>
<div style="left:887.5px;top:300.55px;width:9px;height:9px;background:#fff;border:1px solid #858585;border-radius:1px;box-sizing:border-box;"></div>
<svg class="ic" style="left:853.55px;top:297.3px;width:15.5px;height:15.5px;" viewBox="0 0 24 24"><path fill="#8c8c8c" d="M14 2H6c-1.1 0-1.99.9-1.99 2L4 20c0 1.1.89 2 1.99 2H18c1.1 0 2-.9 2-2V8l-6-6zm2 16H8v-2h8v2zm0-4H8v-2h8v2zm-3-5V3.5L18.5 9H13z"/></svg>
<span class="t" style="top:303.85px;font-size:11px;color:#2b2b2b;left:814px;transform:translate(-50%,-50%) scaleX(0.675);">۱۰۱۰۸</span>
<span class="t" style="top:303.85px;font-size:11px;color:#2b2b2b;left:719.5px;transform:translate(-50%,-50%) scaleX(0.747);">پودر کافی میکس۱*۳- ۱کیلو</span>
<div style="left:644px;top:300.85px;width:8.9px;height:8.2px;background:#d5d5d5;border-radius:1px;"></div>
<svg class="ic" style="left:644.15px;top:300.7px;width:8.5px;height:8.5px;" viewBox="0 0 24 24"><path fill="#fff" d="M9 16.17L4.83 12l-1.42 1.41L9 19 21 7l-1.41-1.41z"/></svg>
<span class="t" style="top:303.85px;font-size:11px;color:#2b2b2b;left:602px;transform:translate(-50%,-50%) scaleX(0.747);">آروانا</span>
<span class="t" style="top:303.85px;font-size:11px;color:#2b2b2b;left:552px;transform:translate(-50%,-50%) scaleX(0.747);">بسته</span>
<span class="t" style="top:303.85px;font-size:11px;color:#2b2b2b;left:515px;transform:translate(-50%,-50%) scaleX(0.747);">بسته</span>
<span class="t" style="top:303.85px;font-size:11px;color:#2b2b2b;left:449px;transform:translate(-50%,-50%) scaleX(0.675);">۰</span>
<span class="t" style="top:303.85px;font-size:11px;color:#2b2b2b;right:603.5px;transform-origin:right center;transform:translateY(-50%) scaleX(0.675);">۰</span>
<span class="t" style="top:303.85px;font-size:11px;color:#2b2b2b;right:712.3px;transform-origin:right center;transform:translateY(-50%) scaleX(0.675);">۸۲۰,۰۰۰</span>
<span class="t" style="top:303.85px;font-size:11px;color:#2b2b2b;right:752px;transform-origin:right center;transform:translateY(-50%) scaleX(0.675);">۱,۱۰۰,۰۰۰</span>
<span class="t" style="top:303.85px;font-size:11px;color:#2b2b2b;right:801.2px;transform-origin:right center;transform:translateY(-50%) scaleX(0.675);">۱,۰۰۰,۰۰۰</span>
<span class="t" style="top:303.85px;font-size:11px;color:#2b2b2b;right:851.8px;transform-origin:right center;transform:translateY(-50%) scaleX(0.675);">۱,۰۴۰,۰۰۰</span>
<span class="t" style="top:303.85px;font-size:11px;color:#2b2b2b;right:904.5px;transform-origin:right center;transform:translateY(-50%) scaleX(0.675);">۰</span>
<span class="t" style="top:303.85px;font-size:11px;color:#2b2b2b;right:927.5px;transform-origin:right center;transform:translateY(-50%) scaleX(0.675);">۱۰۰</span>
<span class="t" style="top:303.85px;font-size:11px;color:#2b2b2b;right:963px;transform-origin:right center;transform:translateY(-50%) scaleX(0.675);">۰۰۰۰۸</span>
<span class="t" style="top:326.75px;font-size:11px;color:#2b2b2b;right:87.8px;transform-origin:right center;transform:translateY(-50%) scaleX(0.675);">۹</span>
<div style="left:887.5px;top:323.45px;width:9px;height:9px;background:#fff;border:1px solid #858585;border-radius:1px;box-sizing:border-box;"></div>
<svg class="ic" style="left:853.55px;top:320.2px;width:15.5px;height:15.5px;" viewBox="0 0 24 24"><path fill="#8c8c8c" d="M14 2H6c-1.1 0-1.99.9-1.99 2L4 20c0 1.1.89 2 1.99 2H18c1.1 0 2-.9 2-2V8l-6-6zm2 16H8v-2h8v2zm0-4H8v-2h8v2zm-3-5V3.5L18.5 9H13z"/></svg>
<span class="t" style="top:326.75px;font-size:11px;color:#2b2b2b;left:814px;transform:translate(-50%,-50%) scaleX(0.675);">۱۰۱۰۹</span>
<span class="t" style="top:326.75px;font-size:11px;color:#2b2b2b;left:719.5px;transform:translate(-50%,-50%) scaleX(0.747);">پودر قهوه ترک شکلاتی-۱کیلو</span>
<div style="left:644px;top:323.75px;width:8.9px;height:8.2px;background:#d5d5d5;border-radius:1px;"></div>
<svg class="ic" style="left:644.15px;top:323.6px;width:8.5px;height:8.5px;" viewBox="0 0 24 24"><path fill="#fff" d="M9 16.17L4.83 12l-1.42 1.41L9 19 21 7l-1.41-1.41z"/></svg>
<span class="t" style="top:326.75px;font-size:11px;color:#2b2b2b;left:602px;transform:translate(-50%,-50%) scaleX(0.747);">آروانا</span>
<span class="t" style="top:326.75px;font-size:11px;color:#2b2b2b;left:552px;transform:translate(-50%,-50%) scaleX(0.747);">بسته</span>
<span class="t" style="top:326.75px;font-size:11px;color:#2b2b2b;left:515px;transform:translate(-50%,-50%) scaleX(0.747);">بسته</span>
<span class="t" style="top:326.75px;font-size:11px;color:#2b2b2b;left:449px;transform:translate(-50%,-50%) scaleX(0.675);">۰</span>
<span class="t" style="top:326.75px;font-size:11px;color:#2b2b2b;right:603.5px;transform-origin:right center;transform:translateY(-50%) scaleX(0.675);">۰</span>
<span class="t" style="top:326.75px;font-size:11px;color:#2b2b2b;right:712.3px;transform-origin:right center;transform:translateY(-50%) scaleX(0.675);">۱,۱۵۰,۰۰۰</span>
<span class="t" style="top:326.75px;font-size:11px;color:#2b2b2b;right:752px;transform-origin:right center;transform:translateY(-50%) scaleX(0.675);">۱,۴۰۰,۰۰۰</span>
<span class="t" style="top:326.75px;font-size:11px;color:#2b2b2b;right:801.2px;transform-origin:right center;transform:translateY(-50%) scaleX(0.675);">۱,۳۰۰,۰۰۰</span>
<span class="t" style="top:326.75px;font-size:11px;color:#2b2b2b;right:851.8px;transform-origin:right center;transform:translateY(-50%) scaleX(0.675);">۱,۳۲۰,۰۰۰</span>
<span class="t" style="top:326.75px;font-size:11px;color:#2b2b2b;right:904.5px;transform-origin:right center;transform:translateY(-50%) scaleX(0.675);">۰</span>
<span class="t" style="top:326.75px;font-size:11px;color:#2b2b2b;right:927.5px;transform-origin:right center;transform:translateY(-50%) scaleX(0.675);">۱۵۴</span>
<span class="t" style="top:326.75px;font-size:11px;color:#2b2b2b;right:963px;transform-origin:right center;transform:translateY(-50%) scaleX(0.675);">۰۰۰۰۹</span>
<span class="t" style="top:349.65px;font-size:11px;color:#2b2b2b;right:87.8px;transform-origin:right center;transform:translateY(-50%) scaleX(0.675);">۱۰</span>
<div style="left:887.5px;top:346.35px;width:9px;height:9px;background:#fff;border:1px solid #858585;border-radius:1px;box-sizing:border-box;"></div>
<svg class="ic" style="left:853.55px;top:343.1px;width:15.5px;height:15.5px;" viewBox="0 0 24 24"><path fill="#8c8c8c" d="M14 2H6c-1.1 0-1.99.9-1.99 2L4 20c0 1.1.89 2 1.99 2H18c1.1 0 2-.9 2-2V8l-6-6zm2 16H8v-2h8v2zm0-4H8v-2h8v2zm-3-5V3.5L18.5 9H13z"/></svg>
<span class="t" style="top:349.65px;font-size:11px;color:#2b2b2b;left:814px;transform:translate(-50%,-50%) scaleX(0.675);">۱۰۱۱۰</span>
<span class="t" style="top:349.65px;font-size:11px;color:#2b2b2b;left:719.5px;transform:translate(-50%,-50%) scaleX(0.747);">پودر وایت چاکلت-۱کیلو</span>
<div style="left:644px;top:346.65px;width:8.9px;height:8.2px;background:#d5d5d5;border-radius:1px;"></div>
<svg class="ic" style="left:644.15px;top:346.5px;width:8.5px;height:8.5px;" viewBox="0 0 24 24"><path fill="#fff" d="M9 16.17L4.83 12l-1.42 1.41L9 19 21 7l-1.41-1.41z"/></svg>
<span class="t" style="top:349.65px;font-size:11px;color:#2b2b2b;left:602px;transform:translate(-50%,-50%) scaleX(0.747);">آروانا</span>
<span class="t" style="top:349.65px;font-size:11px;color:#2b2b2b;left:552px;transform:translate(-50%,-50%) scaleX(0.747);">بسته</span>
<span class="t" style="top:349.65px;font-size:11px;color:#2b2b2b;left:515px;transform:translate(-50%,-50%) scaleX(0.747);">بسته</span>
<span class="t" style="top:349.65px;font-size:11px;color:#2b2b2b;left:449px;transform:translate(-50%,-50%) scaleX(0.675);">۰</span>
<span class="t" style="top:349.65px;font-size:11px;color:#2b2b2b;right:603.5px;transform-origin:right center;transform:translateY(-50%) scaleX(0.675);">۰</span>
<span class="t" style="top:349.65px;font-size:11px;color:#2b2b2b;right:712.3px;transform-origin:right center;transform:translateY(-50%) scaleX(0.675);">۷۵۰,۰۰۰</span>
<span class="t" style="top:349.65px;font-size:11px;color:#2b2b2b;right:752px;transform-origin:right center;transform:translateY(-50%) scaleX(0.675);">۱,۱۰۰,۰۰۰</span>
<span class="t" style="top:349.65px;font-size:11px;color:#2b2b2b;right:801.2px;transform-origin:right center;transform:translateY(-50%) scaleX(0.675);">۱,۰۰۰,۰۰۰</span>
<span class="t" style="top:349.65px;font-size:11px;color:#2b2b2b;right:851.8px;transform-origin:right center;transform:translateY(-50%) scaleX(0.675);">۱,۰۴۰,۰۰۰</span>
<span class="t" style="top:349.65px;font-size:11px;color:#2b2b2b;right:904.5px;transform-origin:right center;transform:translateY(-50%) scaleX(0.675);">۰</span>
<span class="t" style="top:349.65px;font-size:11px;color:#2b2b2b;right:927.5px;transform-origin:right center;transform:translateY(-50%) scaleX(0.675);">۳</span>
<span class="t" style="top:349.65px;font-size:11px;color:#2b2b2b;right:963px;transform-origin:right center;transform:translateY(-50%) scaleX(0.675);">۰۰۰۱۰</span>
<span class="t" style="top:372.55px;font-size:11px;color:#2b2b2b;right:87.8px;transform-origin:right center;transform:translateY(-50%) scaleX(0.675);">۱۱</span>
<div style="left:887.5px;top:369.25px;width:9px;height:9px;background:#fff;border:1px solid #858585;border-radius:1px;box-sizing:border-box;"></div>
<svg class="ic" style="left:853.55px;top:366px;width:15.5px;height:15.5px;" viewBox="0 0 24 24"><path fill="#8c8c8c" d="M14 2H6c-1.1 0-1.99.9-1.99 2L4 20c0 1.1.89 2 1.99 2H18c1.1 0 2-.9 2-2V8l-6-6zm2 16H8v-2h8v2zm0-4H8v-2h8v2zm-3-5V3.5L18.5 9H13z"/></svg>
<span class="t" style="top:372.55px;font-size:11px;color:#2b2b2b;left:814px;transform:translate(-50%,-50%) scaleX(0.675);">۱۰۲۰۱</span>
<span class="t" style="top:372.55px;font-size:11px;color:#2b2b2b;left:719.5px;transform:translate(-50%,-50%) scaleX(0.747);">دله سوری سایز۷</span>
<div style="left:644px;top:369.55px;width:8.9px;height:8.2px;background:#d5d5d5;border-radius:1px;"></div>
<svg class="ic" style="left:644.15px;top:369.4px;width:8.5px;height:8.5px;" viewBox="0 0 24 24"><path fill="#fff" d="M9 16.17L4.83 12l-1.42 1.41L9 19 21 7l-1.41-1.41z"/></svg>
<span class="t" style="top:372.55px;font-size:11px;color:#2b2b2b;left:602px;transform:translate(-50%,-50%) scaleX(0.747);">تجهیزات</span>
<span class="t" style="top:372.55px;font-size:11px;color:#2b2b2b;left:552px;transform:translate(-50%,-50%) scaleX(0.747);">عدد</span>
<span class="t" style="top:372.55px;font-size:11px;color:#2b2b2b;left:515px;transform:translate(-50%,-50%) scaleX(0.747);">عدد</span>
<span class="t" style="top:372.55px;font-size:11px;color:#2b2b2b;left:449px;transform:translate(-50%,-50%) scaleX(0.675);">۰</span>
<span class="t" style="top:372.55px;font-size:11px;color:#2b2b2b;right:603.5px;transform-origin:right center;transform:translateY(-50%) scaleX(0.675);">۰</span>
<span class="t" style="top:372.55px;font-size:11px;color:#2b2b2b;right:712.3px;transform-origin:right center;transform:translateY(-50%) scaleX(0.675);">۲,۷۰۰,۰۰۰</span>
<span class="t" style="top:372.55px;font-size:11px;color:#2b2b2b;right:752px;transform-origin:right center;transform:translateY(-50%) scaleX(0.675);">۳,۳۰۰,۰۰۰</span>
<span class="t" style="top:372.55px;font-size:11px;color:#2b2b2b;right:801.2px;transform-origin:right center;transform:translateY(-50%) scaleX(0.675);">۲,۹۰۰,۰۰۰</span>
<span class="t" style="top:372.55px;font-size:11px;color:#2b2b2b;right:851.8px;transform-origin:right center;transform:translateY(-50%) scaleX(0.675);">۳,۱۰۰,۰۰۰</span>
<span class="t" style="top:372.55px;font-size:11px;color:#2b2b2b;right:904.5px;transform-origin:right center;transform:translateY(-50%) scaleX(0.675);">۰</span>
<span class="t" style="top:372.55px;font-size:11px;color:#2b2b2b;right:927.5px;transform-origin:right center;transform:translateY(-50%) scaleX(0.675);">۰</span>
<span class="t" style="top:372.55px;font-size:11px;color:#2b2b2b;right:963px;transform-origin:right center;transform:translateY(-50%) scaleX(0.675);">۰۰۰۱۱</span>
<span class="t" style="top:395.45px;font-size:11px;color:#2b2b2b;right:87.8px;transform-origin:right center;transform:translateY(-50%) scaleX(0.675);">۱۲</span>
<div style="left:887.5px;top:392.15px;width:9px;height:9px;background:#fff;border:1px solid #858585;border-radius:1px;box-sizing:border-box;"></div>
<svg class="ic" style="left:853.55px;top:388.9px;width:15.5px;height:15.5px;" viewBox="0 0 24 24"><path fill="#8c8c8c" d="M14 2H6c-1.1 0-1.99.9-1.99 2L4 20c0 1.1.89 2 1.99 2H18c1.1 0 2-.9 2-2V8l-6-6zm2 16H8v-2h8v2zm0-4H8v-2h8v2zm-3-5V3.5L18.5 9H13z"/></svg>
<span class="t" style="top:395.45px;font-size:11px;color:#2b2b2b;left:814px;transform:translate(-50%,-50%) scaleX(0.675);">۱۰۲۰۲</span>
<span class="t" style="top:395.45px;font-size:11px;color:#2b2b2b;left:719.5px;transform:translate(-50%,-50%) scaleX(0.747);">دله رسلان سایز۹</span>
<div style="left:644px;top:392.45px;width:8.9px;height:8.2px;background:#d5d5d5;border-radius:1px;"></div>
<svg class="ic" style="left:644.15px;top:392.3px;width:8.5px;height:8.5px;" viewBox="0 0 24 24"><path fill="#fff" d="M9 16.17L4.83 12l-1.42 1.41L9 19 21 7l-1.41-1.41z"/></svg>
<span class="t" style="top:395.45px;font-size:11px;color:#2b2b2b;left:602px;transform:translate(-50%,-50%) scaleX(0.747);">تجهیزات</span>
<span class="t" style="top:395.45px;font-size:11px;color:#2b2b2b;left:552px;transform:translate(-50%,-50%) scaleX(0.747);">عدد</span>
<span class="t" style="top:395.45px;font-size:11px;color:#2b2b2b;left:515px;transform:translate(-50%,-50%) scaleX(0.747);">عدد</span>
<span class="t" style="top:395.45px;font-size:11px;color:#2b2b2b;left:449px;transform:translate(-50%,-50%) scaleX(0.675);">۰</span>
<span class="t" style="top:395.45px;font-size:11px;color:#2b2b2b;right:603.5px;transform-origin:right center;transform:translateY(-50%) scaleX(0.675);">۰</span>
<span class="t" style="top:395.45px;font-size:11px;color:#2b2b2b;right:712.3px;transform-origin:right center;transform:translateY(-50%) scaleX(0.675);">۲,۱۰۰,۰۰۰</span>
<span class="t" style="top:395.45px;font-size:11px;color:#2b2b2b;right:752px;transform-origin:right center;transform:translateY(-50%) scaleX(0.675);">۲,۵۰۰,۰۰۰</span>
<span class="t" style="top:395.45px;font-size:11px;color:#2b2b2b;right:801.2px;transform-origin:right center;transform:translateY(-50%) scaleX(0.675);">۲,۲۵۰,۰۰۰</span>
<span class="t" style="top:395.45px;font-size:11px;color:#2b2b2b;right:851.8px;transform-origin:right center;transform:translateY(-50%) scaleX(0.675);">۲,۴۰۰,۰۰۰</span>
<span class="t" style="top:395.45px;font-size:11px;color:#2b2b2b;right:904.5px;transform-origin:right center;transform:translateY(-50%) scaleX(0.675);">۰</span>
<span class="t" style="top:395.45px;font-size:11px;color:#2b2b2b;right:927.5px;transform-origin:right center;transform:translateY(-50%) scaleX(0.675);">۰</span>
<span class="t" style="top:395.45px;font-size:11px;color:#2b2b2b;right:963px;transform-origin:right center;transform:translateY(-50%) scaleX(0.675);">۰۰۰۱۲</span>
<span class="t" style="top:418.35px;font-size:11px;color:#2b2b2b;right:87.8px;transform-origin:right center;transform:translateY(-50%) scaleX(0.675);">۱۳</span>
<div style="left:887.5px;top:415.05px;width:9px;height:9px;background:#fff;border:1px solid #858585;border-radius:1px;box-sizing:border-box;"></div>
<svg class="ic" style="left:853.55px;top:411.8px;width:15.5px;height:15.5px;" viewBox="0 0 24 24"><path fill="#8c8c8c" d="M14 2H6c-1.1 0-1.99.9-1.99 2L4 20c0 1.1.89 2 1.99 2H18c1.1 0 2-.9 2-2V8l-6-6zm2 16H8v-2h8v2zm0-4H8v-2h8v2zm-3-5V3.5L18.5 9H13z"/></svg>
<span class="t" style="top:418.35px;font-size:11px;color:#2b2b2b;left:814px;transform:translate(-50%,-50%) scaleX(0.675);">۱۰۲۰۳</span>
<span class="t" style="top:418.35px;font-size:11px;color:#2b2b2b;left:719.5px;transform:translate(-50%,-50%) scaleX(0.747);">دله رسلان سایز۱۱</span>
<div style="left:644px;top:415.35px;width:8.9px;height:8.2px;background:#d5d5d5;border-radius:1px;"></div>
<svg class="ic" style="left:644.15px;top:415.2px;width:8.5px;height:8.5px;" viewBox="0 0 24 24"><path fill="#fff" d="M9 16.17L4.83 12l-1.42 1.41L9 19 21 7l-1.41-1.41z"/></svg>
<span class="t" style="top:418.35px;font-size:11px;color:#2b2b2b;left:602px;transform:translate(-50%,-50%) scaleX(0.747);">تجهیزات</span>
<span class="t" style="top:418.35px;font-size:11px;color:#2b2b2b;left:552px;transform:translate(-50%,-50%) scaleX(0.747);">عدد</span>
<span class="t" style="top:418.35px;font-size:11px;color:#2b2b2b;left:515px;transform:translate(-50%,-50%) scaleX(0.747);">عدد</span>
<span class="t" style="top:418.35px;font-size:11px;color:#2b2b2b;left:449px;transform:translate(-50%,-50%) scaleX(0.675);">۰</span>
<span class="t" style="top:418.35px;font-size:11px;color:#2b2b2b;right:603.5px;transform-origin:right center;transform:translateY(-50%) scaleX(0.675);">۰</span>
<span class="t" style="top:418.35px;font-size:11px;color:#2b2b2b;right:712.3px;transform-origin:right center;transform:translateY(-50%) scaleX(0.675);">۲,۶۰۰,۰۰۰</span>
<span class="t" style="top:418.35px;font-size:11px;color:#2b2b2b;right:752px;transform-origin:right center;transform:translateY(-50%) scaleX(0.675);">۳,۱۰۰,۰۰۰</span>
<span class="t" style="top:418.35px;font-size:11px;color:#2b2b2b;right:801.2px;transform-origin:right center;transform:translateY(-50%) scaleX(0.675);">۲,۹۰۰,۰۰۰</span>
<span class="t" style="top:418.35px;font-size:11px;color:#2b2b2b;right:851.8px;transform-origin:right center;transform:translateY(-50%) scaleX(0.675);">۲,۹۰۰,۰۰۰</span>
<span class="t" style="top:418.35px;font-size:11px;color:#2b2b2b;right:904.5px;transform-origin:right center;transform:translateY(-50%) scaleX(0.675);">۰</span>
<span class="t" style="top:418.35px;font-size:11px;color:#2b2b2b;right:927.5px;transform-origin:right center;transform:translateY(-50%) scaleX(0.675);">۰</span>
<span class="t" style="top:418.35px;font-size:11px;color:#2b2b2b;right:963px;transform-origin:right center;transform:translateY(-50%) scaleX(0.675);">۰۰۰۱۳</span>
<span class="t" style="top:441.25px;font-size:11px;color:#2b2b2b;right:87.8px;transform-origin:right center;transform:translateY(-50%) scaleX(0.675);">۱۴</span>
<div style="left:887.5px;top:437.95px;width:9px;height:9px;background:#fff;border:1px solid #858585;border-radius:1px;box-sizing:border-box;"></div>
<svg class="ic" style="left:853.55px;top:434.7px;width:15.5px;height:15.5px;" viewBox="0 0 24 24"><path fill="#8c8c8c" d="M14 2H6c-1.1 0-1.99.9-1.99 2L4 20c0 1.1.89 2 1.99 2H18c1.1 0 2-.9 2-2V8l-6-6zm2 16H8v-2h8v2zm0-4H8v-2h8v2zm-3-5V3.5L18.5 9H13z"/></svg>
<span class="t" style="top:441.25px;font-size:11px;color:#2b2b2b;left:814px;transform:translate(-50%,-50%) scaleX(0.675);">۱۰۲۰۴</span>
<span class="t" style="top:441.25px;font-size:11px;color:#2b2b2b;left:719.5px;transform:translate(-50%,-50%) scaleX(0.747);">گاز اتم آبی</span>
<div style="left:644px;top:438.25px;width:8.9px;height:8.2px;background:#d5d5d5;border-radius:1px;"></div>
<svg class="ic" style="left:644.15px;top:438.1px;width:8.5px;height:8.5px;" viewBox="0 0 24 24"><path fill="#fff" d="M9 16.17L4.83 12l-1.42 1.41L9 19 21 7l-1.41-1.41z"/></svg>
<span class="t" style="top:441.25px;font-size:11px;color:#2b2b2b;left:602px;transform:translate(-50%,-50%) scaleX(0.747);">تجهیزات</span>
<span class="t" style="top:441.25px;font-size:11px;color:#2b2b2b;left:552px;transform:translate(-50%,-50%) scaleX(0.747);">عدد</span>
<span class="t" style="top:441.25px;font-size:11px;color:#2b2b2b;left:515px;transform:translate(-50%,-50%) scaleX(0.747);">عدد</span>
<span class="t" style="top:441.25px;font-size:11px;color:#2b2b2b;left:449px;transform:translate(-50%,-50%) scaleX(0.675);">۰</span>
<span class="t" style="top:441.25px;font-size:11px;color:#2b2b2b;right:603.5px;transform-origin:right center;transform:translateY(-50%) scaleX(0.675);">۰</span>
<span class="t" style="top:441.25px;font-size:11px;color:#2b2b2b;right:712.3px;transform-origin:right center;transform:translateY(-50%) scaleX(0.675);">۱۳۵,۰۰۰</span>
<span class="t" style="top:441.25px;font-size:11px;color:#2b2b2b;right:752px;transform-origin:right center;transform:translateY(-50%) scaleX(0.675);">۲۰۰,۰۰۰</span>
<span class="t" style="top:441.25px;font-size:11px;color:#2b2b2b;right:801.2px;transform-origin:right center;transform:translateY(-50%) scaleX(0.675);">۱۵۵,۰۰۰</span>
<span class="t" style="top:441.25px;font-size:11px;color:#2b2b2b;right:851.8px;transform-origin:right center;transform:translateY(-50%) scaleX(0.675);">۱۷۰,۰۰۰</span>
<span class="t" style="top:441.25px;font-size:11px;color:#2b2b2b;right:904.5px;transform-origin:right center;transform:translateY(-50%) scaleX(0.675);">۰</span>
<span class="t" style="top:441.25px;font-size:11px;color:#2b2b2b;right:927.5px;transform-origin:right center;transform:translateY(-50%) scaleX(0.675);">۱۵</span>
<span class="t" style="top:441.25px;font-size:11px;color:#2b2b2b;right:963px;transform-origin:right center;transform:translateY(-50%) scaleX(0.675);">۰۰۰۱۴</span>
<div style="left:7px;top:448px;width:908.3px;height:18px;background:#fff;"></div>
<span class="t" style="top:456.5px;font-size:11px;color:#707070;right:157.5px;transform-origin:right center;transform:translateY(-50%) scaleX(0.776);-webkit-text-stroke:0;">تعداد : ۱۹۶</span>
<div style="left:7px;top:80px;width:11px;height:386px;background:#fff;"></div>
<div style="left:7.5px;top:80px;width:10.3px;height:11px;background:#f0f0f0;"></div>
<span class="t" style="top:84.5px;font-size:9px;color:#c4c4c4;font-family:'DejaVu Sans',sans-serif;left:13px;transform:translate(-50%,-50%) scaleX(1);-webkit-text-stroke:0;">↑</span>
<div style="left:7.5px;top:91.5px;width:10.5px;height:32.5px;background:#c9c9c9;"></div>
<div style="left:8.2px;top:456px;width:9.6px;height:9.8px;background:#f0f0f0;"></div>
<span class="t" style="top:460px;font-size:9px;color:#bcbcbc;font-family:'DejaVu Sans',sans-serif;left:13px;transform:translate(-50%,-50%) scaleX(1);-webkit-text-stroke:0;">↓</span>
<div style="left:7px;top:466.3px;width:908.3px;height:11px;background:#fff;"></div>
<div style="left:18.6px;top:466.5px;width:10px;height:10.5px;background:#f0f0f0;"></div>
<span class="t" style="top:470.5px;font-size:9px;color:#bcbcbc;font-family:'DejaVu Sans',sans-serif;left:24px;transform:translate(-50%,-50%) scaleX(1);-webkit-text-stroke:0;">→</span>
<div style="left:40.3px;top:466.3px;width:863.7px;height:11px;background:#c9c9c9;"></div>
<div style="left:904px;top:466.3px;width:11.3px;height:11px;background:#f0f0f0;"></div>
<span class="t" style="top:470.5px;font-size:9px;color:#bcbcbc;font-family:'DejaVu Sans',sans-serif;left:909.3px;transform:translate(-50%,-50%) scaleX(1);-webkit-text-stroke:0;">←</span>
</div>
<div id="buttons">
<div style="left:847px;top:484.7px;width:65.4px;height:21.2px;background:#2ba5a8;border-radius:4px;box-shadow:inset 0 0 0 1px rgba(0,0,0,.05);"></div>
<div style="left:889.6px;top:484.7px;width:22.8px;height:21.2px;background:#22979a;border-radius:0 4px 4px 0;"></div>
<svg class="ic" style="left:892px;top:486.4px;width:18px;height:18px;" viewBox="0 0 24 24"><path fill="#fff" d="M19 13h-6v6h-2v-6H5v-2h6V5h2v6h6v2z"/></svg>
<span class="t b" style="top:494.2px;font-size:11px;color:#fff;left:868.8px;transform:translate(-50%,-50%) scaleX(0.784);">جدید</span>
<span class="t b" style="top:488.4px;font-size:7px;color:#fff;font-family:'Liberation Mono','DejaVu Sans Mono',monospace;left:848.8px;transform-origin:left center;transform:translateY(-50%) scaleX(0.852);">Ctrl+N</span>
<div style="left:775.8px;top:484.7px;width:65.2px;height:21.2px;background:#9b9b9b;border-radius:4px;box-shadow:inset 0 0 0 1px rgba(0,0,0,.05);"></div>
<svg class="ic" style="left:822.5px;top:488.8px;width:13px;height:13px;" viewBox="0 0 24 24"><path fill="#fff" d="M3 13h2v-2H3v2zm0 4h2v-2H3v2zm0-8h2V7H3v2zm4 4h14v-2H7v2zm0 4h14v-2H7v2zM7 7v2h14V7H7z"/></svg>
<span class="t b" style="top:494.2px;font-size:11px;color:#fff;left:797px;transform:translate(-50%,-50%) scaleX(0.672);">جزئیات</span>
<div style="left:703.8px;top:484.7px;width:65.1px;height:21.2px;background:#9b9b9b;border-radius:4px;box-shadow:inset 0 0 0 1px rgba(0,0,0,.05);"></div>
<svg class="ic" style="left:750.4px;top:488.2px;width:14px;height:14px;" viewBox="0 0 24 24"><path fill="#fff" d="M6 19c0 1.1.9 2 2 2h8c1.1 0 2-.9 2-2V7H6v12zM19 4h-3.5l-1-1h-5l-1 1H5v2h14V4z"/></svg>
<span class="t b" style="top:494.2px;font-size:11px;color:#fff;left:725.5px;transform:translate(-50%,-50%) scaleX(0.722);">حذف</span>
<div style="left:615.8px;top:484.7px;width:81.7px;height:21.2px;background:#2ba5a8;border-radius:4px;box-shadow:inset 0 0 0 1px rgba(0,0,0,.05);"></div>
<span class="t b" style="top:494.2px;font-size:11px;color:#fff;left:656.65px;transform:translate(-50%,-50%) scaleX(0.642);">ورود اطلاعات سریع</span>
<div style="left:540px;top:484.7px;width:69.5px;height:21.2px;background:#2ba5a8;border-radius:4px;box-shadow:inset 0 0 0 1px rgba(0,0,0,.05);"></div>
<span class="t b" style="top:494.2px;font-size:11px;color:#fff;left:574.75px;transform:translate(-50%,-50%) scaleX(0.651);">دریافت از اکسل</span>
<div style="left:468.2px;top:484.7px;width:65.1px;height:21.2px;background:#2ba5a8;border-radius:4px;box-shadow:inset 0 0 0 1px rgba(0,0,0,.05);"></div>
<span class="t b" style="top:494.2px;font-size:11px;color:#fff;left:500.75px;transform:translate(-50%,-50%) scaleX(0.64);">خروجی اکسل</span>
<div style="left:374.5px;top:484.7px;width:87px;height:21.2px;background:#2ba5a8;border-radius:4px;box-shadow:inset 0 0 0 1px rgba(0,0,0,.05);"></div>
<span class="t b" style="top:494.2px;font-size:11px;color:#fff;left:418.0px;transform:translate(-50%,-50%) scaleX(0.645);">چاپ بهای ارزی ریالی</span>
<div style="left:303px;top:484.7px;width:64.5px;height:21.2px;background:#2ba5a8;border-radius:4px;box-shadow:inset 0 0 0 1px rgba(0,0,0,.05);"></div>
<span class="t b" style="top:494.2px;font-size:11px;color:#fff;left:335.25px;transform:translate(-50%,-50%) scaleX(0.685);">چاپ بارکد</span>
<div style="left:231.8px;top:484.7px;width:64.5px;height:21.2px;background:#2ba5a8;border-radius:4px;box-shadow:inset 0 0 0 1px rgba(0,0,0,.05);"></div>
<span class="t b" style="top:494.2px;font-size:11px;color:#fff;left:264.05px;transform:translate(-50%,-50%) scaleX(0.732);">تولید بارکد</span>
<div style="left:160px;top:484.7px;width:64.5px;height:21.2px;background:#2ba5a8;border-radius:4px;box-shadow:inset 0 0 0 1px rgba(0,0,0,.05);"></div>
<span class="t b" style="top:494.2px;font-size:11px;color:#fff;left:192.25px;transform:translate(-50%,-50%) scaleX(0.714);">تولید کد</span>
</div>
<div id="statusbar">
<div style="left:0px;top:515.7px;width:1000px;height:22.3px;background:#164463;"></div>
<svg class="ic" style="left:967.25px;top:518.45px;width:15.5px;height:15.5px;" viewBox="0 0 24 24"><path fill="#c3ced8" d="M18 3v2h-2V3H8v2H6V3H4v18h2v-2h2v2h8v-2h2v2h2V3h-2zM8 17H6v-2h2v2zm0-4H6v-2h2v2zm0-4H6V7h2v2zm10 8h-2v-2h2v2zm0-4h-2v-2h2v2zm0-4h-2V7h2v2z"/></svg>
<svg class="ic" style="left:948px;top:519.3px;width:14px;height:14px;" viewBox="0 0 24 24"><path fill="#c3ced8" d="M19 2H5c-1.11 0-2 .9-2 2v14c0 1.1.89 2 2 2h4l3 3 3-3h4c1.1 0 2-.9 2-2V4c0-1.1-.9-2-2-2zm-6 16h-2v-2h2v2zm2.07-7.75l-.9.92C13.45 11.9 13 12.5 13 14h-2v-.5c0-1.1.45-2.1 1.17-2.83l1.24-1.26c.37-.36.59-.86.59-1.41 0-1.1-.9-2-2-2s-2 .9-2 2H8c0-2.21 1.79-4 4-4s4 1.79 4 4c0 .88-.36 1.68-.93 2.25z"/></svg>
<svg class="ic" style="left:926.5px;top:519.5px;width:15px;height:15px;" viewBox="0 0 24 24"><path fill="#c3ced8" d="M20 5H4c-1.1 0-1.99.9-1.99 2L2 17c0 1.1.9 2 2 2h16c1.1 0 2-.9 2-2V7c0-1.1-.9-2-2-2zm-9 3h2v2h-2V8zm0 3h2v2h-2v-2zM8 8h2v2H8V8zm0 3h2v2H8v-2zm-1 2H5v-2h2v2zm0-3H5V8h2v2zm9 7H8v-2h8v2zm0-4h-2v-2h2v2zm0-3h-2V8h2v2zm3 3h-2v-2h2v2zm0-3h-2V8h2v2z"/></svg>
<svg class="ic" style="left:902.75px;top:520.25px;width:12.5px;height:12.5px;" viewBox="0 0 24 24"><path fill="#c3ced8" d="M20 0H4v2h16V0zM4 24h16v-2H4v2zM20 4H4c-1.1 0-2 .9-2 2v12c0 1.1.9 2 2 2h16c1.1 0 2-.9 2-2V6c0-1.1-.9-2-2-2zm-8 2.75c1.24 0 2.25 1.01 2.25 2.25s-1.01 2.25-2.25 2.25S9.75 10.24 9.75 9 10.76 6.75 12 6.75zM17 17H7v-1.5c0-1.67 3.33-2.5 5-2.5s5 .83 5 2.5V17z"/></svg>
<span class="t" style="top:525px;font-size:11px;color:#b3c0cc;right:101px;transform-origin:right center;transform:translateY(-50%) scaleX(0.746);">سرپرست تست</span>
<span class="t" style="top:525px;font-size:11px;color:#b3c0cc;right:428px;transform-origin:right center;transform:translateY(-50%) scaleX(0.752);">شعبه: بازرگانی قهوه رویال</span>
<span class="t" style="top:525px;font-size:11px;color:#b3c0cc;right:531.2px;transform-origin:right center;transform:translateY(-50%) scaleX(0.736);">دوره مالی فعال: ۱۴۰۰</span>
<span class="t" style="top:525px;font-size:11px;color:#b3c0cc;right:618px;transform-origin:right center;transform:translateY(-50%) scaleX(0.767);">دوره مالی جاری:</span>
<div style="left:285.8px;top:517.5px;width:33px;height:17px;background:#fff;"></div>
<span class="t b" style="top:525px;font-size:11px;color:#2b2b2b;right:685px;transform-origin:right center;transform:translateY(-50%) scaleX(0.574);">۱۴۰۰</span>
<span class="t" style="top:526px;font-size:5.5px;color:#666;font-family:'DejaVu Sans',sans-serif;left:291px;transform:translate(-50%,-50%) scaleX(1);">▾</span>
<svg class="ic" style="left:263px;top:519px;width:14px;height:14px;" viewBox="0 0 24 24"><path fill="#c3ced8" d="M17.21 9l-4.38-6.56c-.19-.28-.51-.42-.83-.42-.32 0-.64.14-.83.43L6.79 9H2c-.55 0-1 .45-1 1 0 .09.01.18.04.27l2.54 9.27c.23.84 1 1.46 1.92 1.46h13c.92 0 1.69-.62 1.93-1.46l2.54-9.27L23 10c0-.55-.45-1-1-1h-4.79zM9 9l3-4.4L15 9H9zm3 8c-1.1 0-2-.9-2-2s.9-2 2-2 2 .9 2 2-.9 2-2 2z"/></svg>
<span class="t" style="top:525px;font-size:11px;color:#b3c0cc;right:742.5px;transform-origin:right center;transform:translateY(-50%) scaleX(0.788);">فاکتورهای معلق</span>
<svg class="ic" style="left:158.95px;top:519.05px;width:14.5px;height:14.5px;" viewBox="0 0 24 24"><path fill="#c3ced8" d="M20 4H4c-1.11 0-1.99.89-1.99 2L2 18c0 1.11.89 2 2 2h16c1.11 0 2-.89 2-2V6c0-1.11-.89-2-2-2zm0 14H4v-6h16v6zm0-10H4V6h16v2z"/></svg>
<span class="t" style="top:525px;font-size:11px;color:#b3c0cc;right:845px;transform-origin:right center;transform:translateY(-50%) scaleX(0.793);">چک‌های سررسید شده</span>
<span class="t" style="top:525px;font-size:11px;color:#b3c0cc;right:952px;transform-origin:right center;transform:translateY(-50%) scaleX(0.745);">۲۶ آذر ۱۴۰۳</span>
<div style="left:164px;top:537px;width:30px;height:1px;background:#9fb0c0;"></div>
</div>
</body></html>
